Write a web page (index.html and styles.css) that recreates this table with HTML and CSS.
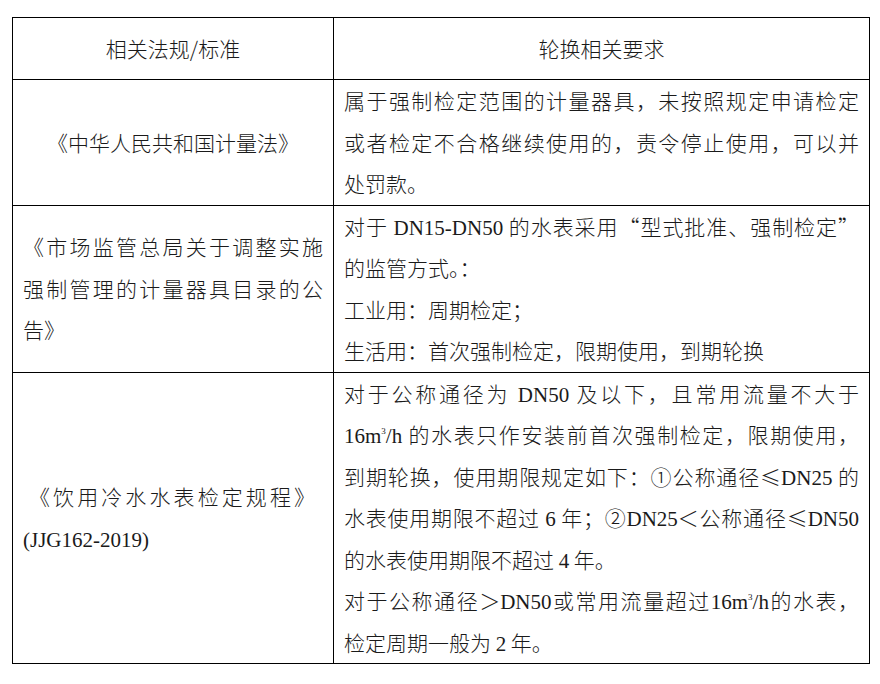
FILE: index.html
```html
<!DOCTYPE html>
<html lang="zh-CN">
<head>
<meta charset="utf-8">
<title>相关法规/标准</title>
<link rel="stylesheet" href="styles.css">
</head>
<body>
<table class="reg">
  <colgroup><col class="c1"><col class="c2"></colgroup>
  <thead>
    <tr><th>相关法规/标准</th><th>轮换相关要求</th></tr>
  </thead>
  <tbody>
    <tr class="r2">
      <td class="law center">《中华人民共和国计量法》</td>
      <td class="req">
        <span class="ln j">属于强制检定范围的计量器具，未按照规定申请检定</span>
        <span class="ln j">或者检定不合格继续使用的，责令停止使用，可以并</span>
        <span class="ln">处罚款。</span>
      </td>
    </tr>
    <tr class="r3">
      <td class="law">
        <span class="ln j">《市场监管总局关于调整实施</span>
        <span class="ln j">强制管理的计量器具目录的公</span>
        <span class="ln">告》</span>
      </td>
      <td class="req">
        <span class="ln j">对于 <span class="lat">DN15-DN50</span> 的水表采用“型式批准、强制检定”</span>
        <span class="ln">的监管方式。：</span>
        <span class="ln">工业用：周期检定；</span>
        <span class="ln">生活用：首次强制检定，限期使用，到期轮换</span>
      </td>
    </tr>
    <tr class="r4">
      <td class="law">
        <span class="ln j">《饮用冷水水表检定规程》</span>
        <span class="ln"><span class="lat">(JJG162-2019)</span></span>
      </td>
      <td class="req">
        <span class="ln j">对于公称通径为 <span class="lat">DN50</span> 及以下，且常用流量不大于</span>
        <span class="ln j"><span class="lat">16m<sup>3</sup>/h</span> 的水表只作安装前首次强制检定，限期使用，</span>
        <span class="ln j">到期轮换，使用期限规定如下：①公称通径≤<span class="lat">DN25</span> 的</span>
        <span class="ln j">水表使用期限不超过 <span class="lat">6</span> 年；②<span class="lat">DN25</span>＜公称通径≤<span class="lat">DN50</span></span>
        <span class="ln">的水表使用期限不超过 <span class="lat">4</span> 年。</span>
        <span class="ln j">对于公称通径＞<span class="lat">DN50</span>或常用流量超过<span class="lat">16m<sup>3</sup>/h</span>的水表，</span>
        <span class="ln">检定周期一般为 <span class="lat">2</span> 年。</span>
      </td>
    </tr>
  </tbody>
</table>
</body>
</html>
```
FILE: styles.css
```css
html, body {
  margin: 0;
  background: #fff;
}
body {
  padding: 17px 12px;
  font-family: "Noto Sans CJK SC", sans-serif;
  color: #1a1a1a;
}
.reg {
  border-collapse: collapse;
  table-layout: fixed;
  width: 857px;
  font-size: 21px;
  line-height: 41.5px;
  font-weight: 300;
}
.c1 { width: 321px; }
.c2 { width: 536px; }
.reg th,
.reg td {
  border: 1px solid #000;
  padding: 0 10px;
  vertical-align: middle;
}
.reg th {
  font-weight: 300;
  text-align: center;
  height: 61px;
}
.reg td { text-align: left; }
.reg td.center { text-align: center; }
.ln { display: block; }
.ln.j {
  text-align: justify;
  text-align-last: justify;
}
.law .ln.j:only-child,
.r4 .law .ln.j {
  padding: 0 8px 0 6px;
}
.lat {
  font-family: "Liberation Serif", serif;
  font-size: 21px;
  font-weight: 400;
  line-height: 1;
}
.lat sup {
  font-size: 9px;
  line-height: 0;
  vertical-align: 9px;
}
```
